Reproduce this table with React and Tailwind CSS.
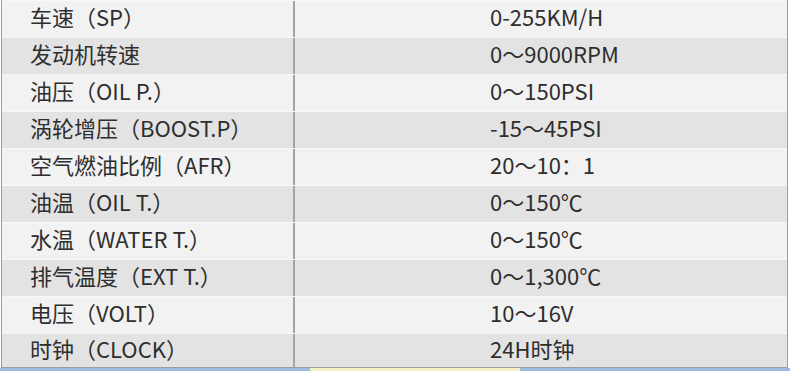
const rows = [
  ["车速（SP）", "0-255KM/H"],
  ["发动机转速", "0～9000RPM"],
  ["油压（OIL P.）", "0～150PSI"],
  ["涡轮增压（BOOST.P）", "-15～45PSI"],
  ["空气燃油比例（AFR）", "20～10：1"],
  ["油温（OIL T.）", "0～150℃"],
  ["水温（WATER T.）", "0～150℃"],
  ["排气温度（EXT T.）", "0～1,300℃"],
  ["电压（VOLT）", "10～16V"],
  ["时钟（CLOCK）", "24H时钟"],
];

export default function App() {
  return (
    <div
      className="w-[790px] h-[372px] overflow-hidden bg-white"
      style={{ fontFamily: '"Noto Sans CJK SC", "Noto Sans", sans-serif' }}
    >
      <div className="mx-px w-[787px] border-x border-[#9d9d9d] border-b">
        {rows.map(([name, value], i) => (
          <div
            key={name}
            className={
              (i % 2 === 0 ? "bg-[#f2f2f2] " : "bg-[#e3e3e3] ") +
              (i === rows.length - 1 ? "h-[34px] " : "h-[37px] ") +
              "flex border-t border-[#f8f8f8] text-[22px] leading-none text-[#2e2e2e]"
            }
          >
            <div className="w-[291px] flex items-center pl-[28px] pb-[6px]">{name}</div>
            <div className="flex-1 flex items-center pl-[195px] pb-[6px] border-l-2 border-[#a3a3a3]">{value}</div>
          </div>
        ))}
      </div>
      <div className="flex h-[3px]">
        <div className="w-[310px] bg-[#9dbbe3]" />
        <div className="w-[210px] bg-[#f6f1c4]" />
        <div className="flex-1 bg-[#9dbbe3]" />
      </div>
    </div>
  );
}
